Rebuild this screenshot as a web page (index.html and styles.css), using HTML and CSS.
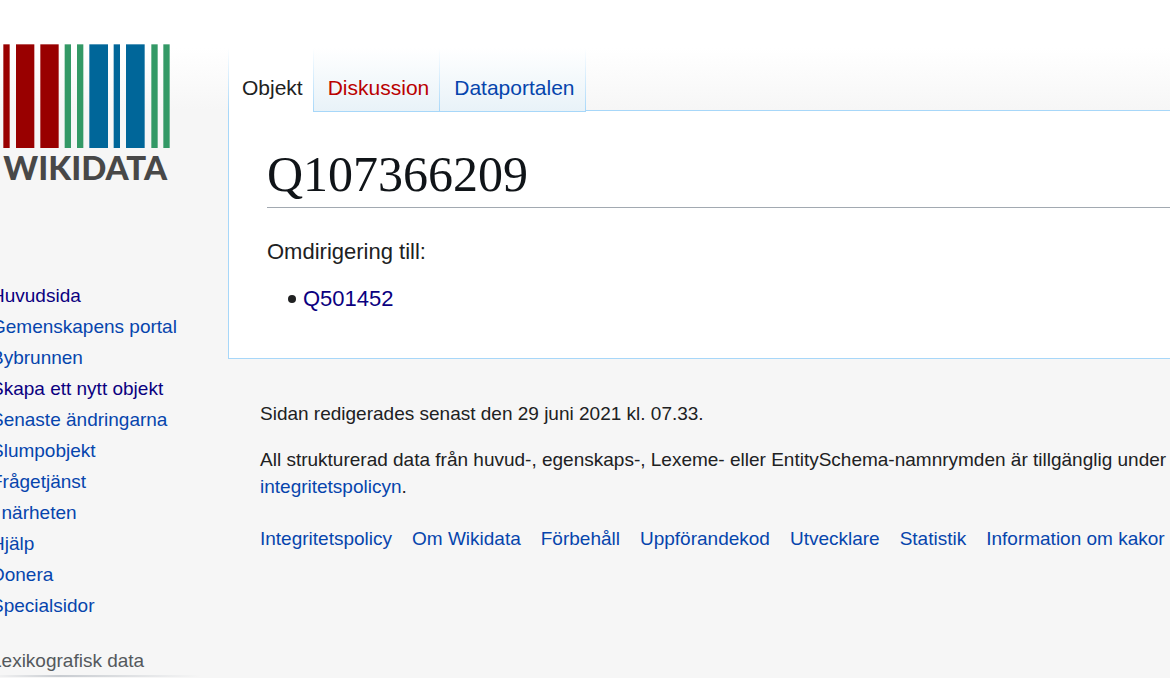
FILE: index.html
```html
<!DOCTYPE html>
<html lang="sv">
<head>
  <meta charset="UTF-8">
  <meta name="viewport" content="width=device-width, initial-scale=1">
  <title>Q107366209 - Wikidata</title>
  <link rel="stylesheet" href="styles.css">
</head>
<body>
  <div class="page">
    <aside class="sidebar">
      <a class="logo" href="#" aria-label="Wikidata">
        <!-- drawn on a grid of three units per pixel -->
        <svg width="180" height="150" viewBox="0 0 540 450">
          <g fill="#990000">
            <rect x="10" y="13" width="19" height="311"/>
            <rect x="48" y="13" width="55" height="311"/>
            <rect x="121" y="13" width="55" height="311"/>
          </g>
          <g fill="#339966">
            <rect x="194" y="13" width="19" height="311"/>
            <rect x="231" y="13" width="19" height="311"/>
            <rect x="454" y="13" width="19" height="311"/>
            <rect x="490" y="13" width="19" height="311"/>
          </g>
          <g fill="#006699">
            <rect x="268" y="13" width="56" height="311"/>
            <rect x="341" y="13" width="19" height="311"/>
            <rect x="378" y="13" width="56" height="311"/>
          </g>
          <text class="logo-text" x="10" y="421">WIKIDATA</text>
        </svg>
      </a>

      <nav class="portal">
        <ul>
          <li><a class="visited" href="#">Huvudsida</a></li>
          <li><a href="#">Gemenskapens portal</a></li>
          <li><a href="#">Bybrunnen</a></li>
          <li><a class="visited" href="#">Skapa ett nytt objekt</a></li>
          <li><a href="#">Senaste ändringarna</a></li>
          <li><a href="#">Slumpobjekt</a></li>
          <li><a href="#">Frågetjänst</a></li>
          <li><a href="#">I närheten</a></li>
          <li><a href="#">Hjälp</a></li>
          <li><a href="#">Donera</a></li>
          <li><a href="#">Specialsidor</a></li>
        </ul>
        <h3>Lexikografisk data</h3>
      </nav>
    </aside>

    <div class="main">
      <nav class="tabs">
        <a class="tab selected" href="#">Objekt</a>
        <a class="tab new" href="#">Diskussion</a>
        <a class="tab" href="#">Dataportalen</a>
      </nav>

      <main class="content">
        <h1>Q107366209</h1>
        <p>Omdirigering till:</p>
        <ul>
          <li><a class="visited" href="#">Q501452</a></li>
        </ul>
      </main>

      <footer class="footer">
        <p>Sidan redigerades senast den 29 juni 2021 kl. 07.33.</p>
        <p>All strukturerad data från huvud-, egenskaps-, Lexeme- eller EntitySchema-namnrymden är tillgänglig under<br>
          <a href="#">integritetspolicyn</a>.</p>
        <ul class="places">
          <li><a href="#">Integritetspolicy</a></li>
          <li><a href="#">Om Wikidata</a></li>
          <li><a href="#">Förbehåll</a></li>
          <li><a href="#">Uppförandekod</a></li>
          <li><a href="#">Utvecklare</a></li>
          <li><a href="#">Statistik</a></li>
          <li><a href="#">Information om kakor</a></li>
        </ul>
      </footer>
    </div>
  </div>
</body>
</html>
```
FILE: styles.css
```css
* {
  margin: 0;
  padding: 0;
  box-sizing: border-box;
}

body {
  background: #f6f6f6;
  color: #202122;
  font-family: "Liberation Sans", Arial, sans-serif;
  font-size: 19px;
  overflow-x: hidden;
}

a {
  color: #0645ad;
  text-decoration: none;
}

a:hover {
  text-decoration: underline;
}

a.visited {
  color: #0b0080;
}

.page {
  display: grid;
  grid-template-columns: 228px minmax(0, 1fr);
  overflow: hidden;
  background: linear-gradient(#fff 48px, #f6f6f6 110px);
}

/* Sidebar */
.sidebar {
  padding-top: 40px;
}

.logo,
.logo svg {
  display: block;
}

.logo-text {
  font-family: Lato, sans-serif;
  font-size: 99px;
  font-weight: 900;
  fill: #484848;
}

/* the menu runs out over the left edge */
.portal {
  margin: 95px 28px 0 -9px;
  white-space: nowrap;
}

.portal ul {
  list-style: none;
}

.portal li {
  line-height: 21px;
  margin-bottom: 10px;
}

.portal h3 {
  margin-top: 34px;
  padding-bottom: 4px;
  font-size: 19px;
  font-weight: normal;
  line-height: 21px;
  color: #54595d;
  border-bottom: 2px solid;
  border-image: linear-gradient(to right, #f6f6f6, #c8ccd1 33%, #f6f6f6) 1;
}

/* Tabs */
.tabs {
  display: flex;
  height: 110px;
  padding-top: 48px;
}

.tab {
  position: relative;
  z-index: 1;
  height: 64px;
  padding: 0 11px 0 14px;
  font-size: 21px;
  line-height: 80px;
  background:
    linear-gradient(#a7d7f9, #a7d7f9) bottom / 100% 1px no-repeat,
    linear-gradient(#fff, #a7d7f9) right / 1px 100% no-repeat,
    linear-gradient(#fff, #e8f2f8);
}

.tab.selected {
  color: #202122;
  background:
    linear-gradient(#fff, #a7d7f9) left / 1px 100% no-repeat,
    linear-gradient(#fff, #a7d7f9) right / 1px 100% no-repeat,
    #fff;
}

.tab.new {
  color: #ba0000;
}

/* Content */
.content {
  padding: 33px 0 44px 38px;
  background: #fff;
  border: 1px solid #a7d7f9;
  border-right: 0;
  font-size: 22px;
  line-height: 30px;
}

.content h1 {
  margin-bottom: 29px;
  padding-bottom: 3px;
  font-family: "Liberation Serif", serif;
  font-size: 50px;
  font-weight: normal;
  line-height: 60px;
  color: #101418;
  border-bottom: 1px solid #a2a9b1;
}

.content ul {
  margin-top: 17px;
  padding-left: 21px;
  list-style: none;
}

.content li {
  display: flex;
  align-items: center;
  gap: 7px;
}

.content li::before {
  content: "";
  width: 8px;
  height: 8px;
  border-radius: 50%;
  background: #202122;
}

/* Footer */
.footer {
  padding: 41px 0 40px 32px;
  line-height: 27px;
  white-space: nowrap;
}

.footer p {
  margin-bottom: 19px;
}

.places {
  display: flex;
  gap: 20px;
  margin-top: 25px;
  list-style: none;
}
```
